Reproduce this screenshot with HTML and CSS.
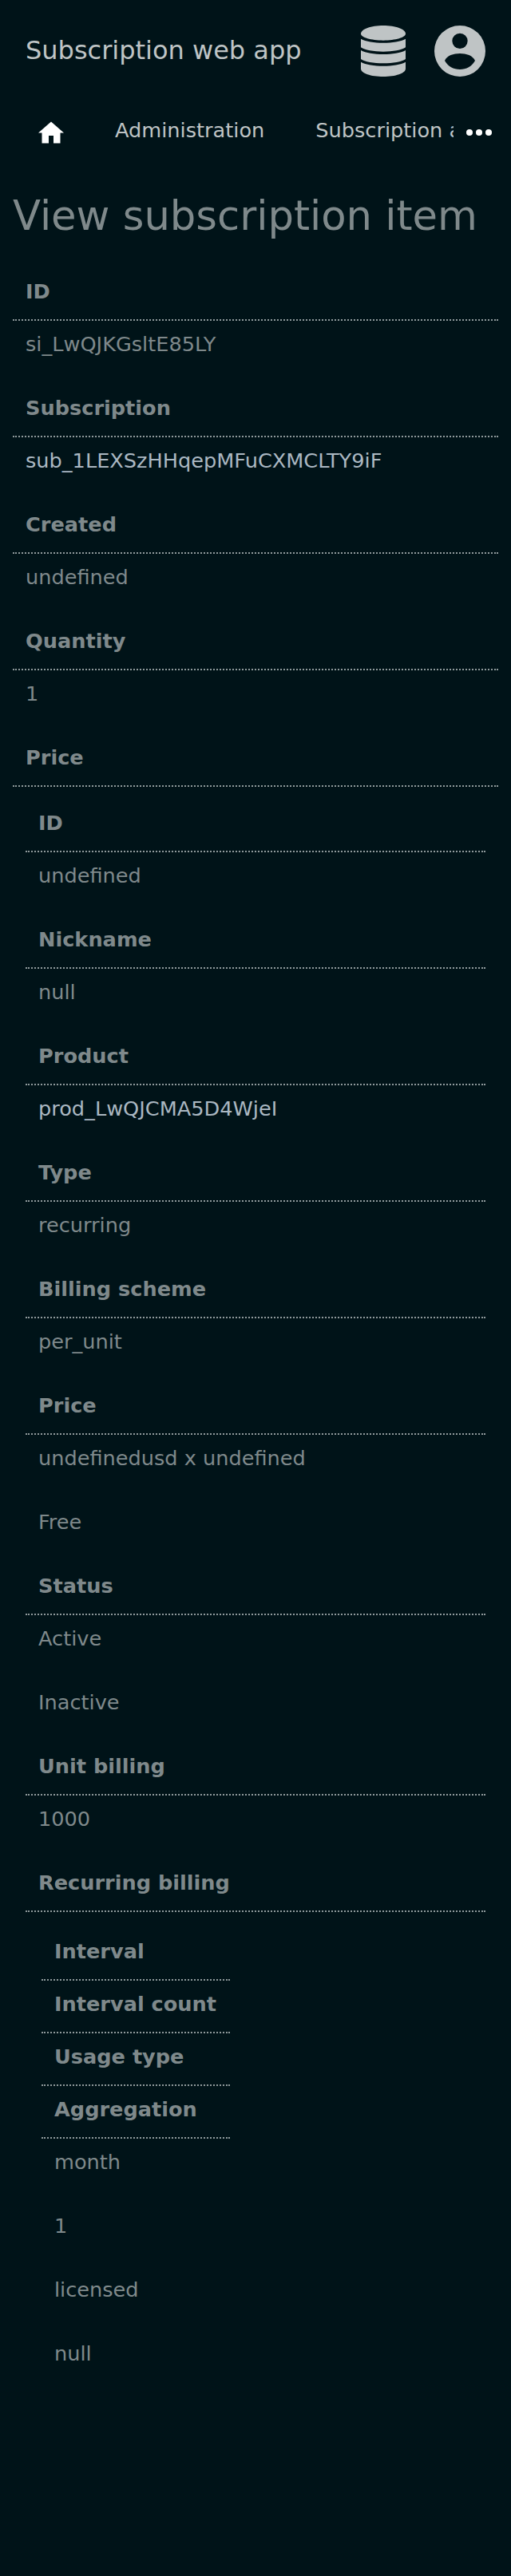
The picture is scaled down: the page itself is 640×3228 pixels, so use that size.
FILE: index.html
```html
<!DOCTYPE html>
<html lang="en">
<head>
<meta charset="utf-8">
<title>View subscription item</title>
<link rel="stylesheet" href="styles.css">
</head>
<body>
<header class="header">
  <div class="brand">Subscription web app</div>
  <div class="menus">
    <svg class="icon-db" viewBox="0 0 168 192"><path d="M84 0C130 0 168 13 168 31C168 45 130 56 84 56S0 45 0 31C0 13 38 0 84 0Z"/><path d="M0 50C18 60 50 65 84 65S150 60 168 50V82C154 92 120 98 84 98S14 92 0 82Z"/><path d="M0 93C18 103 50 108 84 108S150 103 168 93V126C154 136 120 142 84 142S14 136 0 126Z"/><path d="M0 137C18 147 50 152 84 152S150 147 168 137V162C168 180 130 192 84 192S0 180 0 162Z"/></svg>
    <svg class="icon-user" viewBox="0 0 192 192"><path fill-rule="evenodd" d="M96 0A96 96 0 1 1 96 192A96 96 0 1 1 96 0ZM96 29A29 29 0 1 0 96 87A29 29 0 1 0 96 29ZM39 132C51 154 72 165 96 165S141 154 153 132C145 113 120 105 96 105S47 113 39 132Z"/></svg>
  </div>
</header>
<nav class="nav">
  <svg class="icon-home" viewBox="0 0 32 28"><path d="M16 0.500L32 14.500H27.500V27.500H19V18H13V27.500H4.500V14.500H0Z"/></svg>
  <div class="links"><a>Administration</a><a>Subscription administration</a></div>
  <svg class="icon-more" viewBox="0 0 32 8"><circle cx="4" cy="4" r="4"/><circle cx="16" cy="4" r="4"/><circle cx="28" cy="4" r="4"/></svg>
</nav>
<main class="content">
  <h1 class="title">View subscription item</h1>
  <dl class="table">
    <dt>ID</dt><dd>si_LwQJKGsltE85LY</dd>
    <dt>Subscription</dt><dd><a class="link">sub_1LEXSzHHqepMFuCXMCLTY9iF</a></dd>
    <dt>Created</dt><dd>undefined</dd>
    <dt>Quantity</dt><dd>1</dd>
    <dt>Price</dt>
    <dd class="nested">
      <dl class="table">
        <dt>ID</dt><dd>undefined</dd>
        <dt>Nickname</dt><dd>null</dd>
        <dt>Product</dt><dd><a class="link">prod_LwQJCMA5D4WjeI</a></dd>
        <dt>Type</dt><dd>recurring</dd>
        <dt>Billing scheme</dt><dd>per_unit</dd>
        <dt>Price</dt><dd>undefinedusd x undefined</dd><dd>Free</dd>
        <dt>Status</dt><dd>Active</dd><dd>Inactive</dd>
        <dt>Unit billing</dt><dd>1000</dd>
        <dt>Recurring billing</dt>
        <dd class="nested inner">
          <dl class="table">
            <dt>Interval</dt><dt>Interval count</dt><dt>Usage type</dt><dt>Aggregation</dt>
            <dd>month</dd><dd>1</dd><dd>licensed</dd><dd>null</dd>
          </dl>
        </dd>
      </dl>
    </dd>
  </dl>
</main>
</body>
</html>
```
FILE: styles.css
```css
* { box-sizing: border-box; }
body {
  margin: 0;
  min-height: 3228px;
  background: #001318;
  color: #7f898b;
  font: 25.6px/32px "DejaVu Sans", sans-serif;
}
.header {
  display: flex;
  justify-content: space-between;
  align-items: center;
  height: 128px;
  padding: 0 32px;
  color: #bfc4c5;
}
.brand { font-size: 32px; line-height: 40px; padding-bottom: 2px; }
.menus { display: flex; gap: 36px; }
svg { display: block; fill: #bfc4c5; }
.icon-db { width: 56px; height: 64px; }
.icon-user { width: 64px; height: 64px; }
.nav {
  display: flex;
  align-items: center;
  height: 72px;
  padding: 0 24px 0 48px;
  color: #bfc4c5;
}
.icon-home { width: 32px; height: 28px; flex: none; fill: #fff; margin-top: 4px; }
.links {
  display: flex;
  gap: 64px;
  width: 424px;
  margin: 0 16px 2px 64px;
  overflow: hidden;
  white-space: nowrap;
}
.icon-more { width: 32px; height: 8px; flex: none; fill: #fff; margin-top: 4px; }
.content { padding: 0 16px; }
.title {
  height: 136px;
  margin: 0;
  padding-top: 38px;
  font-size: 51.2px;
  font-weight: 400;
  line-height: 64px;
}
.table { margin: 0; }
.table dt {
  height: 66px;
  padding: 13px 16px 0;
  border-bottom: 2px dotted #8f999b;
  font-weight: 700;
}
.table dd { margin: 0; height: 80px; padding: 13px 16px 0; }
.table .nested { height: auto; padding: 16px 16px 0; }
.table .inner { padding: 20px 20px 0; }
.inner .table { width: 236px; }
.inner .table dt { white-space: nowrap; }
.link { color: #abb8c2; }
```
